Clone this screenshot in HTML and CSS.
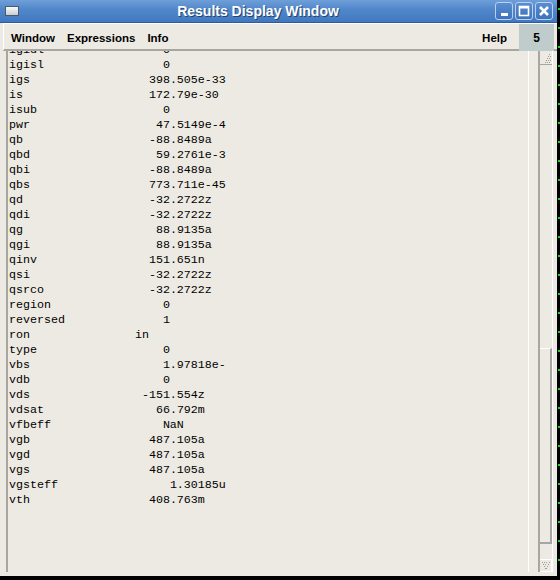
FILE: index.html
```html
<!DOCTYPE html>
<html lang="en">
<head>
  <meta charset="UTF-8">
  <title>Results Display Window</title>
  <link rel="stylesheet" href="styles.css">
</head>
<body>
<div class="screen">
  <div class="window">
    <div class="titlebar">
      <span class="win-icon"></span>
      <span class="title">Results Display Window</span>
      <div class="wm-buttons">
        <span class="wm-btn">
          <svg width="16" height="16" viewBox="0 0 16 16"><rect x="5" y="10" width="7" height="3" fill="#fff"/></svg>
        </span>
        <span class="wm-btn">
          <svg width="16" height="16" viewBox="0 0 16 16"><rect x="3.5" y="3.5" width="9" height="9" fill="none" stroke="#fff" stroke-width="1.6"/><rect x="3" y="3" width="10" height="2.5" fill="#fff"/></svg>
        </span>
        <span class="wm-btn">
          <svg width="16" height="16" viewBox="0 0 16 16"><path d="M4 4 L12 12 M12 4 L4 12" stroke="#fff" stroke-width="2.6"/></svg>
        </span>
      </div>
    </div>

    <div class="menubar">
      <span class="menu">Window</span>
      <span class="menu">Expressions</span>
      <span class="menu">Info</span>
      <span class="spacer"></span>
      <span class="menu help">Help</span>
      <span class="counter">5</span>
    </div>

    <div class="content">
      <div class="results">
        <div class="listing">
          <div class="row"><span class="name c22">igidl</span>0</div>
          <div class="row"><span class="name c22">igisl</span>0</div>
          <div class="row"><span class="name c20">igs</span>398.505e-33</div>
          <div class="row"><span class="name c20">is</span>172.79e-30</div>
          <div class="row"><span class="name c22">isub</span>0</div>
          <div class="row"><span class="name c21">pwr</span>47.5149e-4</div>
          <div class="row"><span class="name c20">qb</span>-88.8489a</div>
          <div class="row"><span class="name c21">qbd</span>59.2761e-3</div>
          <div class="row"><span class="name c20">qbi</span>-88.8489a</div>
          <div class="row"><span class="name c20">qbs</span>773.711e-45</div>
          <div class="row"><span class="name c20">qd</span>-32.2722z</div>
          <div class="row"><span class="name c20">qdi</span>-32.2722z</div>
          <div class="row"><span class="name c21">qg</span>88.9135a</div>
          <div class="row"><span class="name c21">qgi</span>88.9135a</div>
          <div class="row"><span class="name c20">qinv</span>151.651n</div>
          <div class="row"><span class="name c20">qsi</span>-32.2722z</div>
          <div class="row"><span class="name c20">qsrco</span>-32.2722z</div>
          <div class="row"><span class="name c22">region</span>0</div>
          <div class="row"><span class="name c22">reversed</span>1</div>
          <div class="row"><span class="name c18">ron</span>in</div>
          <div class="row"><span class="name c22">type</span>0</div>
          <div class="row"><span class="name c22">vbs</span>1.97818e-</div>
          <div class="row"><span class="name c22">vdb</span>0</div>
          <div class="row"><span class="name c19">vds</span>-151.554z</div>
          <div class="row"><span class="name c21">vdsat</span>66.792m</div>
          <div class="row"><span class="name c22">vfbeff</span>NaN</div>
          <div class="row"><span class="name c20">vgb</span>487.105a</div>
          <div class="row"><span class="name c20">vgd</span>487.105a</div>
          <div class="row"><span class="name c20">vgs</span>487.105a</div>
          <div class="row"><span class="name c23">vgsteff</span>1.30185u</div>
          <div class="row"><span class="name c20">vth</span>408.763m</div>
        </div>
      </div>
      <div class="gutter"></div>
      <div class="scrollbar">
        <span class="arrow up">
          <svg width="10" height="10" viewBox="0 0 10 10" fill="#9a9a9a"><rect x="8" y="0" width="1" height="1"/><rect x="7" y="2" width="1" height="1"/><rect x="9" y="2" width="1" height="1"/><rect x="6" y="4" width="1" height="1"/><rect x="8" y="4" width="1" height="1"/><rect x="5" y="6" width="1" height="1"/><rect x="7" y="6" width="1" height="1"/><rect x="9" y="6" width="1" height="1"/><rect x="4" y="8" width="1" height="1"/><rect x="6" y="8" width="1" height="1"/><rect x="8" y="8" width="1" height="1"/></svg>
        </span>
        <span class="thumb"></span>
        <span class="arrow down">
          <svg width="10" height="10" viewBox="0 0 10 10" fill="#9a9a9a"><rect x="1" y="1" width="1" height="1"/><rect x="3" y="1" width="1" height="1"/><rect x="5" y="1" width="1" height="1"/><rect x="8" y="1" width="1" height="1"/><rect x="2" y="3" width="1" height="1"/><rect x="4" y="3" width="1" height="1"/><rect x="7" y="3" width="1" height="1"/><rect x="3" y="5" width="1" height="1"/><rect x="6" y="5" width="1" height="1"/><rect x="4" y="7" width="1" height="1"/><rect x="5" y="7" width="1" height="1"/></svg>
        </span>
      </div>
    </div>
  </div>
  <div class="edge"></div>
</div>
</body>
</html>
```

FILE: styles.css
```css
body {
  margin: 0;
  background: #000;
}
.screen {
  display: flex;
  width: 560px;
  height: 580px;
  background: #000;
}
.window {
  display: flex;
  flex-direction: column;
  width: 557px;
  height: 576px;
  background: #edeae3;
}
.edge {
  width: 3px;
  height: 576px;
  background-color: #000;
  background-image: linear-gradient(to bottom, #1fd21f 0 2px, transparent 2px);
  background-size: 2px 19px;
  background-position: 1px 8px;
  background-repeat: repeat-y;
}

/* title bar */
.titlebar {
  display: flex;
  align-items: center;
  height: 22px;
  padding: 0 4px 0 5px;
  background: linear-gradient(to bottom, #6f9fd8 0, #5288cb 40%, #4178bf 100%);
  border-bottom: 1px solid #2d5c9c;
}
.win-icon {
  width: 12px;
  height: 8px;
  border: 1px solid #4a5a6e;
  background: linear-gradient(to bottom, #fafafa, #c8ccd2);
}
.title {
  flex: 1;
  text-align: center;
  color: #fff;
  font: bold 14px "Liberation Sans", Arial, sans-serif;
  text-shadow: 1px 1px 0 #24446e;
  padding-left: 2px;
}
.wm-buttons {
  display: flex;
  gap: 2px;
}
.wm-btn {
  display: flex;
  align-items: center;
  justify-content: center;
  width: 16px;
  height: 16px;
  border: 1px solid #b9d0ef;
  border-radius: 3px;
  background: linear-gradient(to bottom, #5a8dd0, #3e73bb);
}

/* menu bar */
.menubar {
  display: flex;
  align-items: stretch;
  height: 25px;
  margin-left: 3px;
  border-top: 1px solid #fff;
  border-left: 1px solid #fff;
  border-bottom: 2px solid #a7a6a2;
  font: bold 11.5px "Liberation Sans", Arial, sans-serif;
}
.menu {
  display: flex;
  align-items: center;
  padding: 2px 6px 0;
  color: #000;
}
.menu:first-child {
  padding-left: 7px;
}
.spacer {
  flex: 1;
}
.help {
  padding-right: 12px;
}
.counter {
  display: flex;
  align-items: center;
  justify-content: center;
  width: 35px;
  margin-bottom: -2px;
  margin-right: 3px;
  background: #c0cccc;
  font-size: 12px;
}

/* results text + scrollbar */
.content {
  flex: 1;
  display: flex;
  min-height: 0;
  padding-bottom: 4px;
}
.results {
  flex: 1;
  overflow: hidden;
  margin-left: 6px;
  border-left: 2px solid #a7a6a2;
}
.listing {
  margin-top: -8px;
  padding-left: 1px;
  font: 11.67px "Liberation Mono", "Courier New", monospace;
  line-height: 15px;
  color: #000;
}
.row {
  white-space: pre;
}
.name {
  display: inline-block;
}
.c18 { width: 18ch; }
.c19 { width: 19ch; }
.c20 { width: 20ch; }
.c21 { width: 21ch; }
.c22 { width: 22ch; }
.c23 { width: 23ch; }

.gutter {
  width: 9px;
  border-left: 1px solid #fff;
}
.scrollbar {
  display: flex;
  flex-direction: column;
  width: 12px;
  margin-right: 4px;
  border-left: 2px solid #a7a6a2;
  border-right: 1px solid #fff;
}
.arrow {
  display: flex;
  align-items: center;
  justify-content: center;
  height: 11px;
}
.arrow.up {
  margin-top: 2px;
  border-bottom: 1px solid #a7a6a2;
}
.thumb {
  height: 193px;
  margin-top: 283px;
  border-top: 1px solid #fff;
  border-right: 2px solid #a7a6a2;
  border-bottom: 2px solid #a7a6a2;
}
.arrow.down {
  margin-top: auto;
  border: 1px solid #fff;
  border-left: 0;
}
```
